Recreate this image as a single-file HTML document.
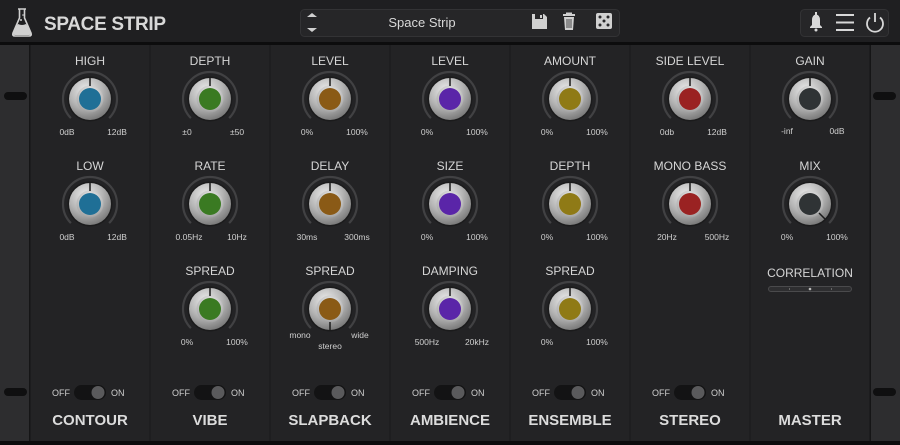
<!DOCTYPE html>
<html><head><meta charset="utf-8"><style>
html,body{margin:0;padding:0;background:#111;}
svg{display:block}
text{font-family:"Liberation Sans","DejaVu Sans",sans-serif;fill:#d6d6d6}
.lb{font-size:12px;text-anchor:middle}
.rg{font-size:8.5px;text-anchor:middle;fill:#cfcfcf}
.tt{font-size:15px;font-weight:bold;text-anchor:middle;fill:#dcdcdc}
.tg{font-size:9px;fill:#cfcfcf}
</style></head><body>
<svg width="900" height="445" viewBox="0 0 900 445" xmlns="http://www.w3.org/2000/svg">
<defs>
<radialGradient id="kb" cx="0.4" cy="0.3" r="0.8">
<stop offset="0" stop-color="#ececec"/><stop offset="0.5" stop-color="#b5b5b5"/><stop offset="1" stop-color="#6a6a6a"/>
</radialGradient>
<radialGradient id="kr" cx="0.5" cy="0.35" r="0.7">
<stop offset="0" stop-color="#ffffff"/><stop offset="1" stop-color="#9a9a9a"/>
</radialGradient>
<g id="knob">
<circle r="27" fill="none" stroke="#414143" stroke-width="2.2" stroke-dasharray="127 200" transform="rotate(135)"/>
<circle r="22.5" fill="#1b1b1c"/>
<circle r="21" fill="url(#kb)"/>
<circle r="13.5" fill="url(#kr)"/>
</g>
</defs>
<rect width="900" height="445" fill="#232325"/>
<rect width="900" height="42" fill="#1f1f21"/>
<rect y="42" width="900" height="3" fill="#0c0c0d"/>
<rect y="441" width="900" height="4" fill="#0c0c0d"/>
<g fill="none" stroke="#d0d0d0" stroke-width="1.6">
<path d="M18 9 h8 M19.5 9 v9 L13 33 q-1 3 2 3 h14 q3 0 2-3 L24.5 18 v-9"/>
</g>
<path d="M15 28 l3 -4 q4 2 8 0 l3 4 L31 33 q1 2-2 2 h-14 q-3 0-2-2z" fill="#d0d0d0"/>
<circle cx="21" cy="20" r="1" fill="#d0d0d0"/><circle cx="23" cy="15" r="0.8" fill="#d0d0d0"/>
<text x="44" y="30" style="font-size:19px;font-weight:bold;fill:#d8d8d8" textLength="122">SPACE STRIP</text>
<rect x="300.5" y="9.5" width="319" height="27" rx="4" fill="#262628" stroke="#333335"/>
<path d="M307 17 l5-4 5 4z M307 28 l5 4 5-4z" fill="#d0d0d0"/>
<text x="422" y="27" style="font-size:13px;text-anchor:middle;fill:#d8d8d8">Space Strip</text>
<path d="M532 14 h12 l3 3 v12 h-15z" fill="#d0d0d0"/><rect x="535" y="14" width="8" height="5" fill="#262628"/><rect x="540" y="15" width="2" height="3" fill="#d0d0d0"/>
<rect x="563" y="14" width="12" height="2" fill="#d0d0d0"/><rect x="566" y="12.5" width="6" height="2" fill="#d0d0d0"/>
<path d="M564 17 h10 l-1 13 h-8z" fill="#d0d0d0"/><path d="M567 19 v9 M569 19 v9 M571 19 v9" stroke="#262628" stroke-width="0.8"/>
<rect x="596" y="13" width="16" height="16" rx="2" fill="#d0d0d0"/>
<g fill="#262628"><circle cx="600" cy="17" r="1.5"/><circle cx="608" cy="17" r="1.5"/><circle cx="604" cy="21" r="1.5"/><circle cx="600" cy="25" r="1.5"/><circle cx="608" cy="25" r="1.5"/></g>
<rect x="800.5" y="9.5" width="88" height="27" rx="4" fill="#262628" stroke="#333335"/>
<path d="M810 28 v-1 l2-2 v-5 q0-5 4-5.5 q4 .5 4 5.5 v5 l2 2 v1z" fill="#d8d8d8"/><circle cx="816" cy="30" r="1.5" fill="#d8d8d8"/><rect x="815" y="12" width="2" height="3" fill="#d8d8d8"/>
<path d="M836 15 h18 M836 22.5 h18 M836 30 h18" stroke="#d8d8d8" stroke-width="2"/>
<path d="M870 17.5 a8 8 0 1 0 10 0" fill="none" stroke="#d8d8d8" stroke-width="1.8"/><path d="M875 13 v9" stroke="#d8d8d8" stroke-width="1.8"/>
<rect x="0" y="45" width="30" height="396" fill="#2d2d2f"/><rect x="29" y="45" width="1.5" height="396" fill="#151516"/>
<rect x="870" y="45" width="30" height="396" fill="#2d2d2f"/><rect x="869.5" y="45" width="1.5" height="396" fill="#151516"/>
<g fill="#0f0f10"><rect x="4" y="92" width="23" height="8" rx="4"/><rect x="4" y="388" width="23" height="8" rx="4"/><rect x="873" y="92" width="23" height="8" rx="4"/><rect x="873" y="388" width="23" height="8" rx="4"/></g>
<g fill="#1a1a1b"><rect x="149.5" y="45" width="1" height="396"/><rect x="269.5" y="45" width="1" height="396"/><rect x="389.5" y="45" width="1" height="396"/><rect x="509.5" y="45" width="1" height="396"/><rect x="629.5" y="45" width="1" height="396"/><rect x="749.5" y="45" width="1" height="396"/></g>

<g>
<use href="#knob" x="90" y="99"/><circle cx="90" cy="99" r="11" fill="#1f6f96"/>
<use href="#knob" x="210" y="99"/><circle cx="210" cy="99" r="11" fill="#3a7a22"/>
<use href="#knob" x="330" y="99"/><circle cx="330" cy="99" r="11" fill="#8a5a16"/>
<use href="#knob" x="450" y="99"/><circle cx="450" cy="99" r="11" fill="#5a25a8"/>
<use href="#knob" x="570" y="99"/><circle cx="570" cy="99" r="11" fill="#8f7a16"/>
<use href="#knob" x="690" y="99"/><circle cx="690" cy="99" r="11" fill="#9a2222"/>
<use href="#knob" x="810" y="99"/><circle cx="810" cy="99" r="11" fill="#2f3335"/>
<use href="#knob" x="90" y="204"/><circle cx="90" cy="204" r="11" fill="#1f6f96"/>
<use href="#knob" x="210" y="204"/><circle cx="210" cy="204" r="11" fill="#3a7a22"/>
<use href="#knob" x="330" y="204"/><circle cx="330" cy="204" r="11" fill="#8a5a16"/>
<use href="#knob" x="450" y="204"/><circle cx="450" cy="204" r="11" fill="#5a25a8"/>
<use href="#knob" x="570" y="204"/><circle cx="570" cy="204" r="11" fill="#8f7a16"/>
<use href="#knob" x="690" y="204"/><circle cx="690" cy="204" r="11" fill="#9a2222"/>
<use href="#knob" x="810" y="204"/><circle cx="810" cy="204" r="11" fill="#2f3335"/>
<use href="#knob" x="210" y="309"/><circle cx="210" cy="309" r="11" fill="#3a7a22"/>
<use href="#knob" x="330" y="309"/><circle cx="330" cy="309" r="11" fill="#8a5a16"/>
<use href="#knob" x="450" y="309"/><circle cx="450" cy="309" r="11" fill="#5a25a8"/>
<use href="#knob" x="570" y="309"/><circle cx="570" cy="309" r="11" fill="#8f7a16"/>
</g>
<g stroke="#1a1a1a" stroke-width="1.5">
<path d="M90 77v9M210 77v9M330 77v9M450 77v9M570 77v9M690 77v9M810 77v9"/>
<path d="M90 182v9M210 182v9M330 182v9M450 182v9M570 182v9M690 182v9"/>
<path d="M210 287v9M450 287v9M570 287v9M330 322v9"/>
<path d="M819 213l6 6"/>
</g>
<g>
<text x="90" y="65" class="lb">HIGH</text><text x="210" y="65" class="lb">DEPTH</text><text x="330" y="65" class="lb">LEVEL</text><text x="450" y="65" class="lb">LEVEL</text><text x="570" y="65" class="lb">AMOUNT</text><text x="690" y="65" class="lb">SIDE LEVEL</text><text x="810" y="65" class="lb">GAIN</text>
<text x="90" y="170" class="lb">LOW</text><text x="210" y="170" class="lb">RATE</text><text x="330" y="170" class="lb">DELAY</text><text x="450" y="170" class="lb">SIZE</text><text x="570" y="170" class="lb">DEPTH</text><text x="690" y="170" class="lb">MONO BASS</text><text x="810" y="170" class="lb">MIX</text>
<text x="210" y="275" class="lb">SPREAD</text><text x="330" y="275" class="lb">SPREAD</text><text x="450" y="275" class="lb">DAMPING</text><text x="570" y="275" class="lb">SPREAD</text><text x="810" y="277" class="lb">CORRELATION</text>
</g>
<g>
<text x="67" y="135" class="rg">0dB</text><text x="117" y="135" class="rg">12dB</text>
<text x="187" y="135" class="rg">±0</text><text x="237" y="135" class="rg">±50</text>
<text x="307" y="135" class="rg">0%</text><text x="357" y="135" class="rg">100%</text>
<text x="427" y="135" class="rg">0%</text><text x="477" y="135" class="rg">100%</text>
<text x="547" y="135" class="rg">0%</text><text x="597" y="135" class="rg">100%</text>
<text x="667" y="135" class="rg">0db</text><text x="717" y="135" class="rg">12dB</text>
<text x="787" y="134" class="rg">-inf</text><text x="837" y="134" class="rg">0dB</text>
<text x="67" y="240" class="rg">0dB</text><text x="117" y="240" class="rg">12dB</text>
<text x="189" y="240" class="rg">0.05Hz</text><text x="237" y="240" class="rg">10Hz</text>
<text x="307" y="240" class="rg">30ms</text><text x="357" y="240" class="rg">300ms</text>
<text x="427" y="240" class="rg">0%</text><text x="477" y="240" class="rg">100%</text>
<text x="547" y="240" class="rg">0%</text><text x="597" y="240" class="rg">100%</text>
<text x="667" y="240" class="rg">20Hz</text><text x="717" y="240" class="rg">500Hz</text>
<text x="787" y="240" class="rg">0%</text><text x="837" y="240" class="rg">100%</text>
<text x="187" y="345" class="rg">0%</text><text x="237" y="345" class="rg">100%</text>
<text x="300" y="338" class="rg">mono</text><text x="330" y="349" class="rg">stereo</text><text x="360" y="338" class="rg">wide</text>
<text x="427" y="345" class="rg">500Hz</text><text x="477" y="345" class="rg">20kHz</text>
<text x="547" y="345" class="rg">0%</text><text x="597" y="345" class="rg">100%</text>
</g>
<rect x="768.5" y="286.5" width="83" height="5" rx="2.5" fill="#2e2e30" stroke="#4a4a4c"/>
<circle cx="810" cy="289" r="1.3" fill="#bbb"/><rect x="789" y="288" width="1" height="2" fill="#666"/><rect x="831" y="288" width="1" height="2" fill="#666"/>
<g id="tg">
<text x="52" y="396" class="tg">OFF</text><rect x="74" y="385" width="32" height="15" rx="7.5" fill="#131314"/><circle cx="98" cy="392.5" r="6.5" fill="#5a5a5c"/><text x="111" y="396" class="tg">ON</text>
</g>
<use href="#tg" x="120"/><use href="#tg" x="240"/><use href="#tg" x="360"/><use href="#tg" x="480"/><use href="#tg" x="600"/>
<text x="90" y="425" class="tt">CONTOUR</text><text x="210" y="425" class="tt">VIBE</text><text x="330" y="425" class="tt">SLAPBACK</text><text x="450" y="425" class="tt">AMBIENCE</text><text x="570" y="425" class="tt">ENSEMBLE</text><text x="690" y="425" class="tt">STEREO</text><text x="810" y="425" class="tt">MASTER</text>
</svg>
</body></html>
